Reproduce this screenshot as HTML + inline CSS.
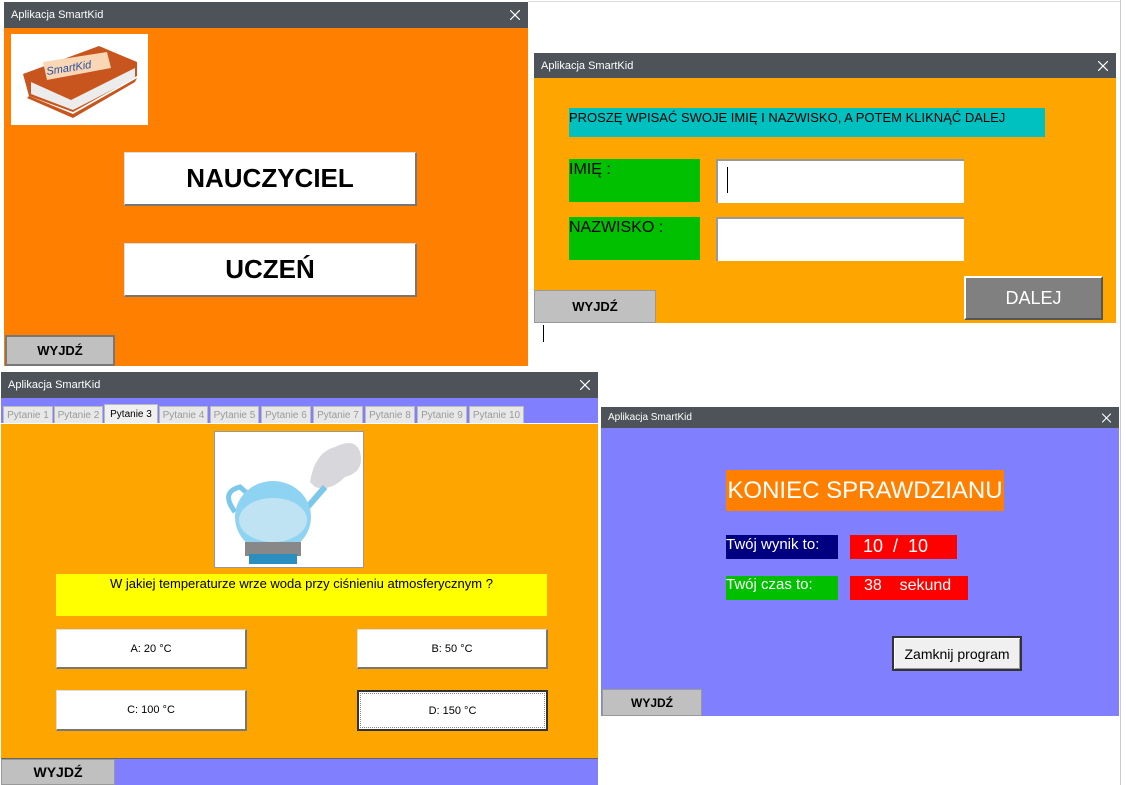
<!DOCTYPE html>
<html><head><meta charset="utf-8"><style>
*{margin:0;padding:0;box-sizing:border-box}
body{width:1126px;height:785px;background:#fff;position:relative;overflow:hidden;font-family:"Liberation Sans","DejaVu Sans",sans-serif}
.a{position:absolute}
.tb{position:absolute;background:#4d5359;color:#fff;font-size:11px;padding-left:7px;display:flex;align-items:center}
.tb svg.x{position:absolute;right:8px;top:50%;transform:translateY(-50%)}
.c{display:flex;align-items:center;justify-content:center}
.btnw{background:#fff;border-right:2px solid #777;border-bottom:2px solid #777;border-top:1px solid #ddd;border-left:1px solid #ddd}
.wy{background:#c0c0c0;font-weight:bold;font-size:13px;color:#000;border:1px solid #999}
.tab{position:absolute;top:406px;height:17px;background:#e8e8e8;border:1px solid #bbb;border-bottom:none;color:#9a9a9a;font-size:10px;display:flex;align-items:center;justify-content:center}
</style></head><body>
<div class="a" style="left:1120px;top:0;width:1px;height:785px;background:#ccc"></div>
<div class="a" style="left:528px;top:1px;width:592px;height:1px;background:#ddd"></div>

<!-- Window 1 -->
<div class="tb" style="left:4px;top:2px;width:524px;height:26px">Aplikacja SmartKid<svg class="x" width="10" height="10"><path d="M0 0L10 10M10 0L0 10" stroke="#fff" stroke-width="1.2"/></svg></div>
<div class="a" style="left:4px;top:28px;width:524px;height:338px;background:#ff8000"></div>
<div class="a" style="left:11px;top:34px;width:137px;height:91px;background:#fff">
<svg width="137" height="91" viewBox="0 0 137 91">
<path d="M12 40 L88 12 L126 28 L126 42 L62 78 L18 62 Z" fill="#c8541e"/>
<path d="M20 48 L60 66 L124 34 L124 44 L62 76 L20 60 Z" fill="#ececec"/>
<path d="M18 62 L62 80 L126 44 L124 48 L62 84 L16 64 Z" fill="#c8541e"/>
<path d="M32 28 L96 18 L100 34 L36 46 Z" fill="#f9d7b5"/>
<text x="36" y="41" font-size="11" fill="#2a4fa0" font-style="italic" transform="rotate(-9 36 41)">SmartKid</text>
</svg></div>
<div class="a c btnw" style="left:124px;top:152px;width:293px;height:54px;font-weight:bold;font-size:26px">NAUCZYCIEL</div>
<div class="a c btnw" style="left:124px;top:243px;width:293px;height:54px;font-weight:bold;font-size:26px">UCZEŃ</div>
<div class="a c wy" style="left:5px;top:335px;width:110px;height:31px;border:2px solid #777">WYJDŹ</div>

<!-- Window 2 -->
<div class="tb" style="left:534px;top:53px;width:582px;height:25px">Aplikacja SmartKid<svg class="x" width="10" height="10"><path d="M0 0L10 10M10 0L0 10" stroke="#fff" stroke-width="1.2"/></svg></div>
<div class="a" style="left:534px;top:78px;width:582px;height:245px;background:#ffa500"></div>
<div class="a" style="left:569px;top:108px;width:476px;height:29px;background:#00c0c0;font-size:13px;padding-top:2px">PROSZĘ WPISAĆ SWOJE IMIĘ I NAZWISKO, A POTEM KLIKNĄĆ DALEJ</div>
<div class="a" style="left:569px;top:159px;width:131px;height:43px;background:#00c000;font-size:16px;padding-top:2px;color:#000">IMIĘ :</div>
<div class="a" style="left:569px;top:217px;width:131px;height:43px;background:#00c000;font-size:16px;padding-top:2px;color:#000">NAZWISKO :</div>
<div class="a" style="left:716px;top:159px;width:248px;height:44px;background:#fff;border-top:2px solid #999;border-left:2px solid #999"><div class="a" style="left:9px;top:6px;width:1px;height:26px;background:#000"></div></div>
<div class="a" style="left:716px;top:217px;width:248px;height:44px;background:#fff;border-top:2px solid #999;border-left:2px solid #999"></div>
<div class="a c" style="left:964px;top:276px;width:139px;height:44px;background:#808080;color:#fff;font-size:18px;border-top:2px solid #fff;border-left:2px solid #fff;border-right:2px solid #555;border-bottom:2px solid #555">DALEJ</div>
<div class="a c wy" style="left:534px;top:290px;width:122px;height:33px">WYJDŹ</div>
<div class="a" style="left:543px;top:325px;width:1px;height:17px;background:#000"></div>

<!-- Window 3 -->
<div class="tb" style="left:1px;top:372px;width:597px;height:26px">Aplikacja SmartKid<svg class="x" width="10" height="10"><path d="M0 0L10 10M10 0L0 10" stroke="#fff" stroke-width="1.2"/></svg></div>
<div class="a" style="left:1px;top:398px;width:597px;height:26px;background:#8080ff"></div>
<div class="tab" style="left:3px;width:50px">Pytanie 1</div>
<div class="tab" style="left:54px;width:49px">Pytanie 2</div>
<div class="tab" style="left:104px;top:404px;height:20px;width:54px;background:#f0f0f0;color:#000">Pytanie 3</div>
<div class="tab" style="left:159px;width:49px">Pytanie 4</div>
<div class="tab" style="left:210px;width:49px">Pytanie 5</div>
<div class="tab" style="left:261px;width:50px">Pytanie 6</div>
<div class="tab" style="left:313px;width:50px">Pytanie 7</div>
<div class="tab" style="left:365px;width:50px">Pytanie 8</div>
<div class="tab" style="left:417px;width:50px">Pytanie 9</div>
<div class="tab" style="left:469px;width:55px">Pytanie 10</div>
<div class="a" style="left:1px;top:423px;width:597px;height:335px;background:#ffa500;border-top:1px solid #fff"></div>
<div class="a" style="left:214px;top:431px;width:150px;height:137px;background:#fff;border:1px solid #999">
<svg width="148" height="135" viewBox="0 0 148 135">
<path d="M95 50 Q100 20 120 15 Q140 5 145 20 Q150 40 130 45 Q115 60 100 55Z" fill="#d8d8dc"/>
<path d="M20 80 Q5 60 25 55 L40 68" stroke="#7cc8ea" stroke-width="5" fill="none"/>
<path d="M90 78 L110 55" stroke="#7cc8ea" stroke-width="6"/>
<ellipse cx="58" cy="85" rx="38" ry="36" fill="#8fd3f2"/>
<ellipse cx="58" cy="88" rx="34" ry="22" fill="#bfe3f3"/>
<rect x="30" y="110" width="56" height="14" fill="#888"/>
<rect x="34" y="122" width="48" height="10" fill="#2a8fc0"/>
</svg></div>
<div class="a" style="left:56px;top:574px;width:491px;height:42px;background:#ffff00;font-size:13px;text-align:center;padding-top:2px">W jakiej temperaturze wrze woda przy ciśnieniu atmosferycznym ?</div>
<div class="a c btnw" style="left:56px;top:629px;width:191px;height:40px;font-size:11px">A: 20 °C</div>
<div class="a c btnw" style="left:357px;top:629px;width:191px;height:40px;font-size:11px">B: 50 °C</div>
<div class="a c btnw" style="left:56px;top:690px;width:191px;height:41px;font-size:11px">C: 100 °C</div>
<div class="a c" style="left:357px;top:690px;width:191px;height:41px;font-size:11px;background:#fff;border:2px solid #333;outline:1px dotted #888;outline-offset:-4px">D: 150 °C</div>
<div class="a" style="left:1px;top:758px;width:597px;height:27px;background:#8080ff;border-top:1px solid #666"></div>
<div class="a c wy" style="left:1px;top:759px;width:114px;height:26px;font-size:14px">WYJDŹ</div>

<!-- Window 4 -->
<div class="tb" style="left:601px;top:407px;width:518px;height:21px;font-size:10px">Aplikacja SmartKid<svg class="x" width="9" height="9"><path d="M0 0L9 9M9 0L0 9" stroke="#fff" stroke-width="1.1"/></svg></div>
<div class="a" style="left:601px;top:428px;width:518px;height:288px;background:#8080ff"></div>
<div class="a c" style="left:726px;top:470px;width:278px;height:41px;background:#ff8000;color:#fff;font-size:24px">KONIEC SPRAWDZIANU</div>
<div class="a" style="left:726px;top:535px;width:112px;height:24px;background:#000080;color:#fff;font-size:15px;padding-top:1px">Twój wynik to:</div>
<div class="a" style="left:850px;top:535px;width:107px;height:24px;background:#ff0000;color:#fff;font-size:18px;padding:1px 0 0 13px;white-space:pre">10  /  10</div>
<div class="a" style="left:726px;top:576px;width:112px;height:24px;background:#00c000;color:#fff;font-size:15px">Twój czas to:</div>
<div class="a" style="left:850px;top:576px;width:118px;height:24px;background:#ff0000;color:#fff;font-size:16px;padding:1px 0 0 14px;white-space:pre">38    sekund</div>
<div class="a c" style="left:892px;top:636px;width:130px;height:35px;background:#f0f0f0;border:2px solid #333;box-shadow:inset 1px 1px 0 #fff,inset -1px -1px 0 #999;font-size:14px">Zamknij program</div>
<div class="a c wy" style="left:602px;top:689px;width:100px;height:27px;font-size:12px">WYJDŹ</div>
</body></html>
